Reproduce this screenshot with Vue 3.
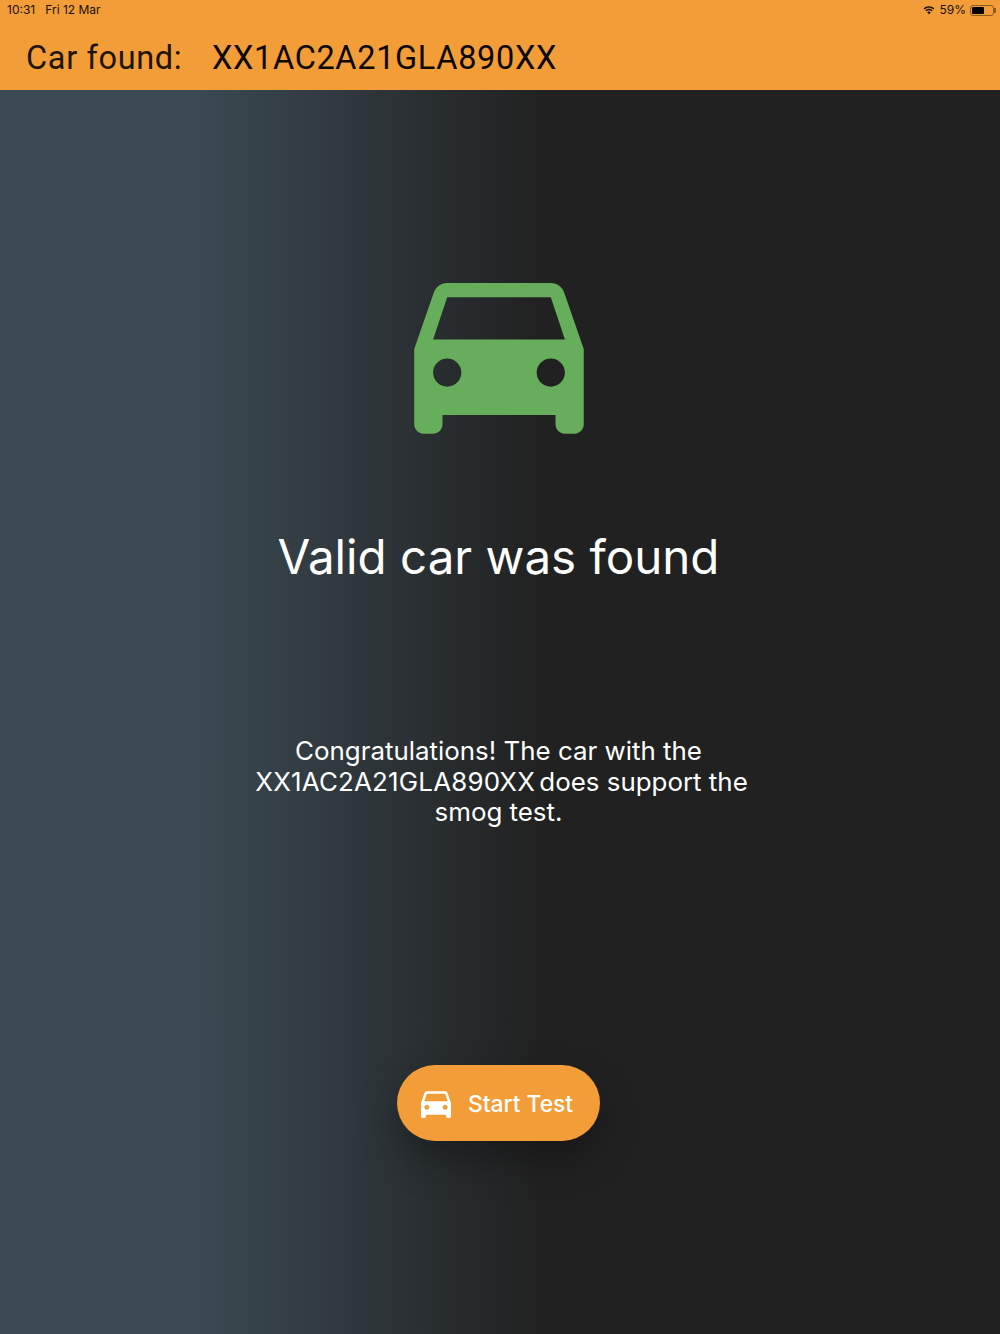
<template>
  <div class="screen">
    <header class="app-bar">
      <div class="status-bar">
        <div class="status-left">
          <span>10:31</span>
          <span>Fri 12 Mar</span>
        </div>
        <div class="status-right">
          <svg class="wifi" viewBox="0 0 16 12" width="12" height="9">
            <path d="M8 2.2c2.3 0 4.4.9 6 2.4l1.2-1.3C13.300 1.500 10.800.4 8 .4S2.700 1.500.8 3.300L2 4.600c1.600-1.500 3.700-2.400 6-2.400z" />
            <path d="M8 5.600c1.400 0 2.600.5 3.600 1.400l1.200-1.300C11.500 4.500 9.800 3.800 8 3.800s-3.500.7-4.800 1.900L4.400 7c1-.9 2.200-1.400 3.600-1.400z" />
            <path d="M8 7.300c-1 0-1.800.4-2.400 1L8 11l2.400-2.700c-.6-.6-1.400-1-2.400-1z" />
          </svg>
          <span>59%</span>
          <span class="battery"><span class="battery-level"></span></span>
        </div>
      </div>
      <h1 class="bar-title">
        <span class="bar-label">Car found:</span>
        <span class="bar-vin">{{ vin }}</span>
      </h1>
    </header>

    <main class="content">
      <svg class="hero-icon" viewBox="0 0 24 24" width="226" height="226">
        <path :d="carPath" />
      </svg>
      <h2 class="headline">Valid car was found</h2>
      <p class="message">
        Congratulations! The car with the<br />
        <span class="message-vin">{{ vin }}</span> does support the<br />
        smog test.
      </p>
      <button class="start-btn">
        <svg viewBox="0 0 24 24" width="40" height="40">
          <path :d="carPath" />
        </svg>
        <span>Start Test</span>
      </button>
    </main>
  </div>
</template>

<script setup>
const vin = 'XX1AC2A21GLA890XX'

// material directions_car
const carPath =
  'M18.92 6.01C18.72 5.42 18.16 5 17.5 5h-11c-.66 0-1.21.42-1.42 1.01L3 12v8c0 .55.45 1 1 1h1c.55 0 1-.45 1-1v-1h12v1c0 .55.45 1 1 1h1c.55 0 1-.45 1-1v-8l-2.08-5.99zM6.5 16c-.83 0-1.5-.67-1.5-1.5S5.67 13 6.5 13s1.5.67 1.5 1.5S7.33 16 6.500 16zm11 0c-.83 0-1.5-.67-1.5-1.5s.67-1.5 1.5-1.5 1.5.67 1.5 1.5-.67 1.5-1.5 1.5zM5 11l1.5-4.5h11L19 11H5z'
</script>

<style scoped>
.screen {
  width: 1000px;
  height: 1334px;
  display: flex;
  flex-direction: column;
  overflow: hidden;
  font-family: Inter, "Noto Sans", sans-serif;
}

.app-bar {
  height: 90px;
  flex: none;
  background: #f39d38;
  color: #1d1406;
}

.status-bar {
  height: 20px;
  padding: 0 6px 0 7px;
  display: flex;
  justify-content: space-between;
  align-items: center;
  font-size: 12px;
  color: #17100a;
  line-height: 18px;
}

.status-left {
  display: flex;
  gap: 10px;
}

.status-right {
  display: flex;
  align-items: center;
  gap: 4px;
}

.wifi {
  fill: #17100a;
  margin-right: 0;
}

.battery {
  width: 24px;
  height: 11px;
  border: 1px solid #8a5c22;
  border-radius: 3px;
  padding: 1px;
  box-sizing: border-box;
  display: flex;
  position: relative;
}

/* battery nub */
.battery::after {
  content: "";
  position: absolute;
  right: -3px;
  top: 2px;
  width: 2px;
  height: 5px;
  background: #8a5c22;
  border-radius: 0 1px 1px 0;
}

.battery-level {
  width: 12px;
  background: #000;
  border-radius: 1px;
}

.bar-title {
  margin: 0;
  padding: 16px 0 0 26px;
  font-size: 32.500px;
  font-weight: 400;
  line-height: 44px;
  display: flex;
  font-family: Roboto, sans-serif;
  letter-spacing: 0.65px;
}

.bar-label {
  width: 186px;
}

.bar-vin {
  color: #0b0703;
}

.content {
  flex: 1;
  display: flex;
  flex-direction: column;
  align-items: center;
  background: linear-gradient(90deg, #3a4952 0%, #3a4952 20%, #212121 54%, #212121 100%);
  color: #fff;
  padding-right: 3px;
}

.hero-icon {
  margin-top: 146px;
  fill: #66ae5c;
}

.headline {
  margin: 64px 0 0;
  font-size: 47.500px;
  line-height: 62px;
  font-weight: 400;
}

.message {
  margin: 148px 0 0;
  font-size: 25.900px;
  line-height: 30.700px;
  text-align: center;
}

.message-vin {
  letter-spacing: 0.2px;
  margin-right: -3px;
  padding-left: 6px;
}

.start-btn {
  margin-top: 237px;
  width: 203px;
  height: 76px;
  padding: 0 0 0 19px;
  border: none;
  border-radius: 38px;
  background: #f39d38;
  color: #fff;
  font-family: inherit;
  font-size: 22.800px;
  font-weight: 500;
  display: flex;
  align-items: center;
  gap: 12px;
  box-shadow: 0 18px 40px rgba(0, 0, 0, 0.3);
}

.start-btn svg {
  fill: #fff;
  flex: none;
}
</style>
